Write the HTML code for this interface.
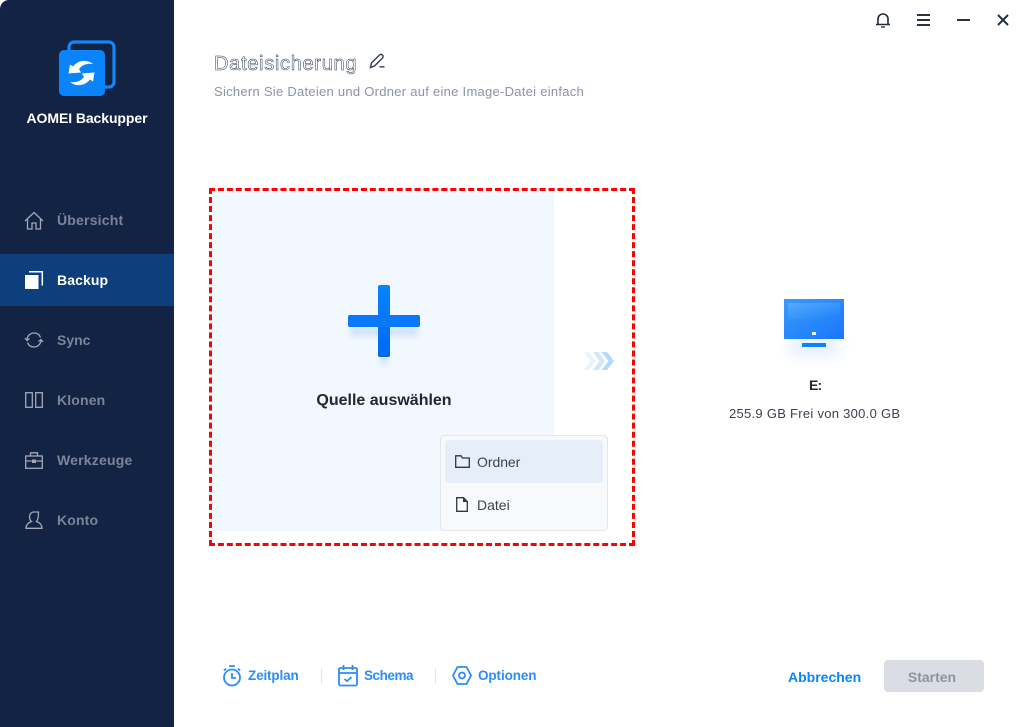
<!DOCTYPE html>
<html lang="de">
<head>
<meta charset="utf-8">
<title>AOMEI Backupper</title>
<style>
html,body{margin:0;padding:0;width:1023px;height:727px;overflow:hidden;background:#fff}
body{position:relative;font-family:"Liberation Sans",sans-serif}
.a{position:absolute}
.t{position:absolute;white-space:nowrap;line-height:20px;height:20px}
svg{position:absolute;overflow:visible}
.nav{font-size:14px;font-weight:700;color:#7c8497;left:57px}
.blue{font-size:13.5px;font-weight:700;color:#2a8cff}
</style>
</head>
<body>
<div class="a" style="left:0;top:0;width:174px;height:727px;background:#132344;border-top-left-radius:9px"></div>

<!-- logo -->
<svg style="left:0;top:0" width="174" height="130" viewBox="0 0 174 130">
<rect x="69" y="42" width="45" height="45" rx="5" fill="none" stroke="#1585fb" stroke-width="3.2"/>
<rect x="59" y="50" width="46" height="46" rx="5" fill="#0a84fb"/>
<path d="M68.500 73.500 70 64.500 73 66.500C78 60 87 59 93 64 87 63 82 65 79 69L81 72.500Z" fill="#fff"/>
<path d="M94.500 72.500 93 81.500 90 79.500C85 86 76 87 70 82 76 83 81 81 84 77L82 73.500Z" fill="#fff"/>
</svg>
<div class="t" style="left:0;width:174px;top:108px;text-align:center;font-size:14px;font-weight:700;color:#fff;letter-spacing:-.08px">AOMEI Backupper</div>

<!-- nav -->
<div class="a" style="left:0;top:254px;width:174px;height:52px;background:#0c3f7c"></div>

<svg style="left:24px;top:211px" width="20" height="20" viewBox="0 0 20 20" fill="none" stroke="#a2a8b5" stroke-width="1.300">
<path d="M1 10 10 1.500 19 10M3.500 8v10h4.500v-6h4v6h4.500V8"/>
</svg>
<div class="t nav" style="top:210px;letter-spacing:.2px">Übersicht</div>

<svg style="left:25px;top:271px" width="18" height="18" viewBox="0 0 18 18">
<rect x="0" y="4" width="13.500" height="14" fill="#fff"/>
<path d="M4 .8H17.300V14.500" fill="none" stroke="#fff" stroke-width="1.500"/>
</svg>
<div class="t" style="left:57px;top:270px;font-size:14px;font-weight:700;color:#fff;letter-spacing:.1px">Backup</div>

<svg style="left:24px;top:331px" width="20" height="18" viewBox="0 0 20 18" fill="none" stroke="#a2a8b5" stroke-width="1.300">
<path d="M3 8.500C3.500 4.500 6.500 2 10 2c3 0 5.500 1.500 6.500 4.500M17 9.500c-.5 4-3.500 6.500-7 6.500-3 0-5.500-1.500-6.500-4.500"/>
<path d="M1 7 3 9.500 5.500 7.500M14.500 10.500 17 8.500 19 11"/>
</svg>
<div class="t nav" style="top:330px">Sync</div>

<svg style="left:25px;top:392px" width="18" height="16" viewBox="0 0 18 16" fill="none" stroke="#a2a8b5" stroke-width="1.300">
<rect x=".7" y=".7" width="6.600" height="14.600"/>
<path d="M10.700.7h6.600v14.600h-6.600z"/>
</svg>
<div class="t nav" style="top:390px;letter-spacing:.15px">Klonen</div>

<svg style="left:25px;top:452px" width="18" height="17" viewBox="0 0 18 17" fill="none" stroke="#a2a8b5" stroke-width="1.300">
<rect x=".7" y="4" width="16.600" height="12.300"/>
<path d="M5.500 4V.8h7V4M.7 9h6M11.300 9h6"/>
<rect x="7" y="7.500" width="4" height="3.500" fill="#a2a8b5" stroke="none"/>
</svg>
<div class="t nav" style="top:450px;letter-spacing:.2px">Werkzeuge</div>

<svg style="left:25px;top:511px" width="18" height="18" viewBox="0 0 18 18" fill="none" stroke="#a2a8b5" stroke-width="1.300">
<path d="M6.500 10.500C5 9.500 4.500 7.500 4.500 5.800 4.500 3 6.500 1 9 1h4.500C13.500 6 13 9 11.500 10.500 14.500 11.500 17 13.500 17 17.300H1C1 13.500 3.500 11.500 6.500 10.500Z"/>
</svg>
<div class="t nav" style="top:510px;letter-spacing:.15px">Konto</div>

<!-- window controls -->
<svg style="left:875px;top:12px" width="16" height="16" viewBox="0 0 16 16" fill="none" stroke="#1f2a3c" stroke-width="1.600">
<path d="M1 12.500h14M3 12.500V7a5 5 0 0 1 10 0v5.500"/>
<path d="M6 15h4" stroke-width="1.300"/>
</svg>
<svg style="left:917px;top:14px" width="13" height="12" viewBox="0 0 13 12" fill="#2a3342">
<rect y="0" width="13" height="2"/><rect y="5" width="13" height="2"/><rect y="10" width="13" height="2"/>
</svg>
<div class="a" style="left:957px;top:19px;width:13px;height:2px;background:#2a3342"></div>
<svg style="left:997px;top:14px" width="12" height="12" viewBox="0 0 12 12" stroke="#2a3342" stroke-width="2.100" fill="none">
<path d="M1 1 11 11M11 1 1 11"/>
</svg>

<!-- heading -->
<div class="t" style="left:214px;top:54px;font-size:20px;color:#fff;-webkit-text-stroke:.5px #26344f;letter-spacing:.7px">Dateisicherung</div>
<svg style="left:369px;top:53px" width="16" height="16" viewBox="0 0 16 16" fill="none" stroke="#333b4b" stroke-width="1.400">
<path d="M1.500 14.500 2.500 10 10.500 2a1.800 1.800 0 0 1 3 3L5.500 13z"/>
<path d="M10.500 13.800h5"/>
</svg>
<div class="t" style="left:214px;top:82px;font-size:13px;color:#8c93a4;letter-spacing:.27px">Sichern Sie Dateien und Ordner auf eine Image-Datei einfach</div>

<!-- source panel -->
<div class="a" style="left:212px;top:191px;width:342px;height:340px;background:#f2f8ff"></div>
<div class="a" style="left:209px;top:188px;width:420px;height:352px;border:3px dashed #f00"></div>

<!-- plus -->
<div class="a" style="left:350px;top:327px;width:68px;height:9px;background:#0a6bf0;opacity:.14;filter:blur(3px)"></div>
<div class="a" style="left:380px;top:357px;width:8px;height:8px;background:#0a6bf0;opacity:.14;filter:blur(3px)"></div>
<div class="a" style="left:378px;top:285px;width:12px;height:72px;border-radius:2px;background:linear-gradient(#0a84fb,#0068f7)"></div>
<div class="a" style="left:348px;top:315px;width:72px;height:12px;border-radius:2px;background:#0a78fb"></div>
<div class="t" style="left:213px;width:342px;top:391px;text-align:center;font-size:16px;font-weight:700;color:#23272f">Quelle auswählen</div>

<!-- chevrons -->
<svg style="left:584px;top:352px" width="30" height="18" viewBox="0 0 30 18">
<path d="M0 0h5l6.500 9L5 18H0l6.500-9z" fill="#e8f3fe"/>
<path d="M9 0h5.500L21 9l-6.500 9H9l6.500-9z" fill="#d0e7fd"/>
<path d="M17.500 0H23l7 9-7 9h-5.500l7-9z" fill="#b3dafd"/>
</svg>

<!-- popup -->
<div class="a" style="left:440px;top:435px;width:166px;height:94px;background:#f7f9fb;border:1px solid #e3e6ea;border-radius:4px"></div>
<div class="a" style="left:445px;top:440px;width:158px;height:43px;background:#e6eff9;border-radius:4px"></div>
<svg style="left:455px;top:455px" width="15" height="13" viewBox="0 0 15 13" fill="none" stroke="#30363f" stroke-width="1.300">
<path d="M.7.8H6L7.500 3h6.800v9.300H.7z"/>
</svg>
<div class="t" style="left:477px;top:452px;font-size:14px;color:#3b4250;letter-spacing:-.05px">Ordner</div>
<svg style="left:456px;top:497px" width="12" height="15" viewBox="0 0 12 15" fill="none" stroke="#30363f" stroke-width="1.300">
<path d="M.7.7H7.500L11.300 4.500V14.300H.7z"/>
<path d="M7 1V5h4z" fill="#30363f" stroke="none"/>
</svg>
<div class="t" style="left:477px;top:495px;font-size:14px;color:#3b4250">Datei</div>

<!-- destination -->
<div class="a" style="left:790px;top:336px;width:48px;height:20px;background:#2a7bf5;opacity:.12;filter:blur(7px)"></div>
<div class="a" style="left:784px;top:299px;width:60px;height:40px;background:linear-gradient(150deg,#3a9bfb,#1a76fb)"></div>
<div class="a" style="left:788px;top:303px;width:52px;height:16px;background:linear-gradient(170deg,rgba(125,195,255,.4),rgba(125,195,255,0) 85%)"></div>
<div class="a" style="left:812px;top:332px;width:4px;height:3px;background:#e6f1ff"></div>
<div class="a" style="left:802px;top:343px;width:24px;height:4px;background:#0a84fb"></div>
<div class="t" style="left:809px;top:375px;font-size:14px;font-weight:700;color:#23272f;letter-spacing:-.8px">E:</div>
<div class="t" style="left:729px;top:404px;font-size:13px;color:#3b4250;letter-spacing:.28px">255.9 GB Frei von 300.0 GB</div>

<!-- bottom bar -->
<svg style="left:222px;top:665px" width="20" height="22" viewBox="0 0 20 22" fill="none" stroke="#2a8cff" stroke-width="1.800">
<circle cx="10" cy="12.500" r="8"/>
<path d="M7 1h6M10 8v5h4M2 5.500 4 3.500M18 5.500 16 3.500"/>
</svg>
<div class="t blue" style="left:248px;top:666px;letter-spacing:-.15px">Zeitplan</div>
<div class="a" style="left:321px;top:668px;width:1px;height:16px;background:#e2e5e9"></div>
<svg style="left:338px;top:665px" width="20" height="22" viewBox="0 0 20 22" fill="none" stroke="#2a8cff" stroke-width="1.800">
<rect x="1" y="3" width="18" height="17.500" rx="1.500"/>
<path d="M1 8h18M5.500 0v5M14.500 0v5"/>
<path d="M6.500 14 9 16.200 13.500 12"/>
</svg>
<div class="t blue" style="left:364px;top:666px;letter-spacing:-.45px">Schema</div>
<div class="a" style="left:435px;top:668px;width:1px;height:16px;background:#e2e5e9"></div>
<svg style="left:452px;top:666px" width="20" height="19" viewBox="0 0 20 19" fill="none" stroke="#2a8cff" stroke-width="1.800">
<path d="M5.500 1h9L19 9.500 14.500 18h-9L1 9.500z"/>
<circle cx="10" cy="9.500" r="3"/>
</svg>
<div class="t blue" style="left:478px;top:666px;letter-spacing:-.1px">Optionen</div>

<div class="t" style="left:788px;top:667px;font-size:14px;font-weight:700;color:#0a84fb">Abbrechen</div>
<div class="a" style="left:884px;top:660px;width:100px;height:32px;background:#dadee4;border-radius:4px"></div>
<div class="t" style="left:882px;width:100px;top:667px;text-align:center;font-size:14px;font-weight:700;color:#8d93a3">Starten</div>
</body>
</html>
